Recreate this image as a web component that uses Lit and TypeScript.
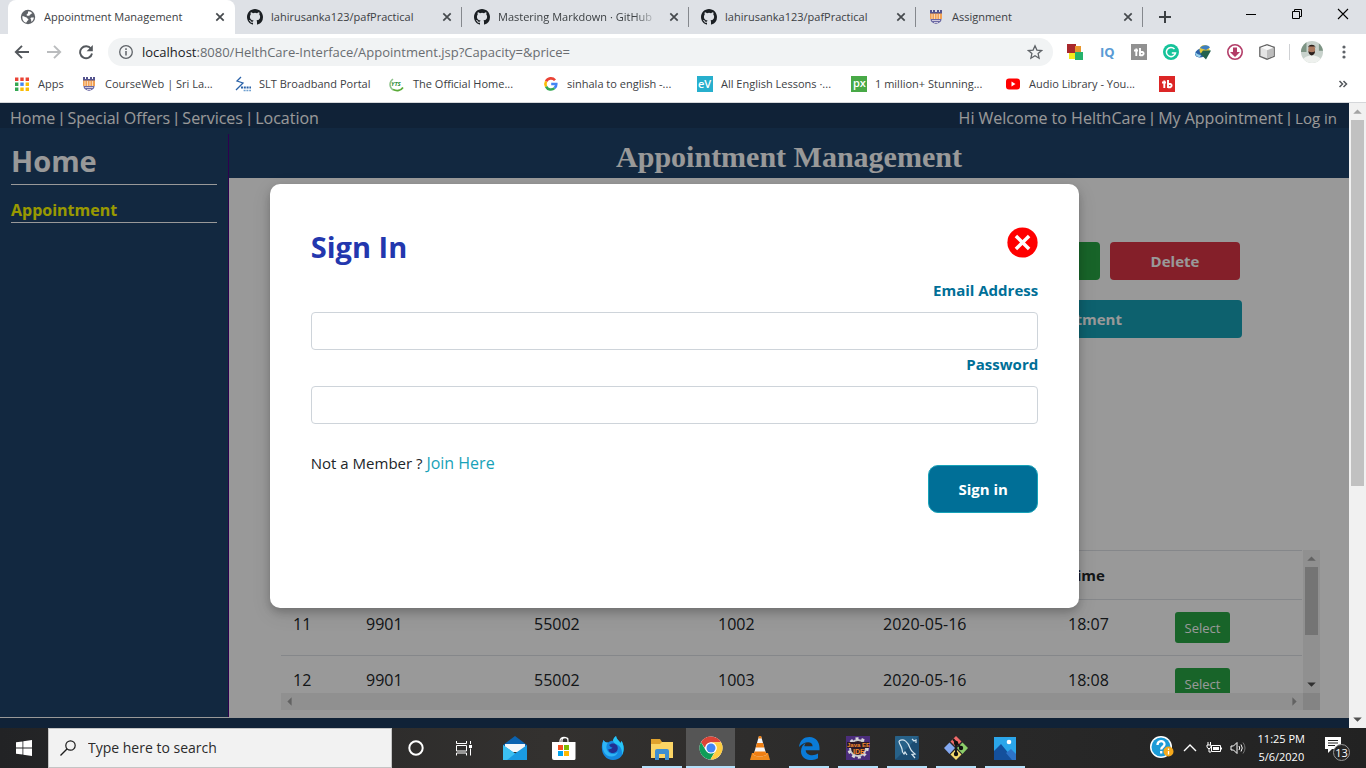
import { LitElement, html, css, svg, nothing } from "lit";
import { customElement, property } from "lit/decorators.js";

const octocat = svg`<path fill="#1b1f23" d="M8 0C3.58 0 0 3.58 0 8c0 3.54 2.29 6.53 5.47 7.59.4.07.55-.17.55-.38 0-.19-.01-.82-.01-1.49-2.01.37-2.53-.49-2.69-.94-.09-.23-.48-.94-.82-1.13-.28-.15-.68-.52-.01-.53.63-.01 1.08.58 1.23.82.72 1.21 1.87.87 2.33.66.07-.52.28-.87.51-1.07-1.78-.2-3.64-.89-3.64-3.95 0-.87.31-1.59.82-2.15-.08-.2-.36-1.02.08-2.12 0 0 .67-.21 2.2.82a7.6 7.6 0 0 1 4 0c1.53-1.04 2.2-.82 2.2-.82.44 1.1.16 1.92.08 2.12.51.56.82 1.27.82 2.15 0 3.07-1.87 3.75-3.65 3.95.29.25.54.73.54 1.48 0 1.07-.01 1.93-.01 2.2 0 .21.15.46.55.38A8.01 8.01 0 0 0 16 8c0-4.42-3.58-8-8-8z"/>`;
const crest = svg`<path fill="#55548e" d="M2 1h2v2h1V1h2v2h2V1h2v2h1V1h2v4H2z"/><path fill="#f2a154" d="M2 4.500h12V10H2z"/><path stroke="#fbe6d0" stroke-width=".8" d="M4 5v5M6.500 5v5M9 5v5M11.500 5v5"/><path fill="#6b69a4" d="M2.500 10h11c0 3-2.500 4-5.500 5-3-1-5.500-2-5.500-5z"/><path stroke="#e9e3ee" d="M4 11.500h8M6 13.500h4" stroke-width=".8"/>`;

const icons: Record<string, unknown> = {
  globe: svg`<circle cx="8" cy="8" r="7.200" fill="#5f6368"/><path fill="#fff" d="M2.500 7c1.500 0 2 1 3.500 1.200 1 .2 1 1.300 2 1.500.8.3.4 1.600-.5 2.100-.7.500-.6 1.600-1.500 2A6 6 0 0 1 2.500 7zM8.500 2.200c1.200 0 2.900.7 3.900 2-1 .2-1.200 1-2 1.200-.9.200-.6 1.400-1.700 1.300-1-.2-2 .2-2.100-.8 0-.9 1.300-.9 1.400-1.900.1-.8-.3-1.300.5-1.800zM10.600 9c1-.8 2-.5 3.300-.4-.2 1.700-1.100 3.300-2.500 4.200-.5-.9.100-1.500-.4-2.300-.3-.6-.8-1-.4-1.500z"/>`,
  github: octocat,
  crest,
  slt: svg`<path d="M6 1 2 5l6 2-5 5-2 2" fill="none" stroke="#2a62a8" stroke-width="1.300"/><path stroke="#2a62a8" stroke-width="2" stroke-dasharray="2 .8" d="M6 11.500h10"/><path stroke="#6fa0d0" stroke-width="1.500" stroke-dasharray="2 .8" d="M8.600 14.500h7.400"/>`,
  yts: svg`<path d="M4 3C0 6 0 11 4 14" fill="none" stroke="#8cc28a" stroke-width="1.500"/><path d="M4 13.500c4 2 8 1 10-2" fill="none" stroke="#5aaa38" stroke-width="1.700"/><text x="2" y="10" font-size="6" font-weight="700" font-style="italic" font-family="Open Sans" fill="#2f8f3a">YTS</text>`,
  google: svg`<g fill="none" stroke-width="2.600"><path stroke="#ea4335" d="M3.100 5.400A5.300 5.300 0 0 1 12 4.300"/><path stroke="#fbbc05" d="M3.100 5.400a5.300 5.300 0 0 0 0 5.200"/><path stroke="#34a853" d="M3.100 10.600a5.300 5.300 0 0 0 8.400 1.500"/><path stroke="#4285f4" d="M8.200 8h5.100a5.200 5.200 0 0 1-1.800 4.100"/></g>`,
  ev: svg`<rect width="16" height="16" fill="#27afcd"/><text x="1" y="12" font-size="11" font-weight="600" font-family="Open Sans" fill="#fff">eV</text>`,
  px: svg`<rect width="16" height="16" fill="#48a947"/><text x="2" y="11" font-size="11" font-weight="600" font-family="Open Sans" fill="#fff">px</text>`,
  youtube: svg`<rect x="1" y="2.500" width="14" height="11" rx="3" fill="#f00"/><path fill="#fff" d="m6.500 5.500 4 2.500-4 2.500z"/>`,
  tbred: svg`<rect width="16" height="16" fill="#dc2626"/><path fill="none" stroke="#fff" stroke-width="1.900" d="M3 6.500h4M5.300 4.500V12M9 4v8M9 8h2.500a1.700 1.700 0 0 1 0 3.200H9"/>`,
  tbgrey: svg`<rect width="16" height="16" fill="#919191"/><path fill="none" stroke="#fff" stroke-width="1.900" d="M3 6.500h4M5.300 4.500V12M9 4v8M9 8h2.500a1.700 1.700 0 0 1 0 3.200H9"/>`,
  apps: svg`<g><path fill="#ea4335" d="M1 1.500h3.400v3.400H1zM6.300 1.500h3.400v3.400H6.300zM11.600 1.500H15v3.400h-3.400z"/><path fill="#34a853" d="M1 6.500h3.400v3.400H1zM1 11.500h3.400v3.400H1z"/><path fill="#4285f4" d="M6.300 6.500h3.400v3.400H6.300z"/><path fill="#fbbc05" d="M11.600 6.500H15v3.400h-3.400zM6.300 11.500h3.400v3.400H6.300zM11.600 11.500H15v3.400h-3.400z"/></g>`,
  close: svg`<path d="m4.300 4.300 7.400 7.400M11.700 4.300l-7.400 7.400" stroke="#45494d" stroke-width="1.700"/>`,
  plus: svg`<path d="M8 2v12M2 8h12" stroke="#3c4043" stroke-width="2"/>`,
  min: svg`<path d="M3 8.500h10" stroke="#000"/>`,
  restore: svg`<path d="M3.500 5.500h7v7h-7zM5.500 5.500v-2h7v7h-2" fill="none" stroke="#000"/>`,
  exit: svg`<path d="m3 3 10 10M13 3 3 13" stroke="#000" stroke-width="1.100"/>`,
  back: svg`<path d="M15 8H2M8 1.800 1.800 8 8 14.200" fill="none" stroke="#54585d" stroke-width="1.900"/>`,
  forward: svg`<path d="M1 8h13M8 1.800 14.200 8 8 14.200" fill="none" stroke="#babcbe" stroke-width="1.900"/>`,
  reload: svg`<path d="M13 4.800A6 6 0 1 0 14 9.500" fill="none" stroke="#54585d" stroke-width="1.900"/><path fill="#54585d" d="M14.800 1v6.200H8.600z"/>`,
  info: svg`<circle cx="8" cy="8" r="6.300" fill="none" stroke="#5f6368" stroke-width="1.300"/><path d="M8 7v4.500M8 4.300V6" stroke="#5f6368" stroke-width="1.500"/>`,
  star: svg`<path d="m8 1.800 1.900 4.300 4.700.4-3.500 3.100 1 4.600L8 11.800l-4.100 2.400 1-4.600-3.500-3.100 4.700-.4z" fill="none" stroke="#5f6368" stroke-width="1.300"/>`,
  blocks: svg`<path fill="#a8282c" d="M0 0h9v9H0z"/><path fill="#e9962c" d="M8 2h6v6H8z"/><path fill="#f5ea1d" d="M2 9h6v6H2z"/><path fill="#26b26c" d="M8 8h8v8H8z"/>`,
  iq: svg`<text x="1" y="13" font-size="13" font-weight="700" font-family="Open Sans" fill="#5a9bd5">IQ</text>`,
  grammarly: svg`<circle cx="8" cy="8" r="8" fill="#15c39a"/><path d="M11.500 5A4.600 4.600 0 1 0 12.500 9H8.800" fill="none" stroke="#fff" stroke-width="1.500"/>`,
  idm: svg`<ellipse cx="7" cy="8.500" rx="7.500" ry="4.600" fill="#2c62a8" transform="rotate(-20 7 8)"/><circle cx="9.500" cy="6" r="5" fill="#e4c93a"/><path fill="#3f7fc0" d="M5 4c2-3 8-4 10-.5L11 6z"/><path fill="#24624e" d="M8 6.500h8l-5 9-5.500-5.500z"/><path fill="#9bd4ec" d="M0 8c2 2 4 3 6 3l-1 2C2 13 0 11 0 8z"/>`,
  download: svg`<circle cx="8" cy="8" r="7.200" fill="#fff" stroke="#b33d68" stroke-width="1.600"/><path fill="#b33d68" d="M6 3.500h4V8h3l-5 5-5-5h3z"/>`,
  cube: svg`<path fill="#e4e4e4" stroke="#666" stroke-width="1.300" d="M.8 3.300 8 .8l7.200 2.500v9L8 15.200.8 12.300z"/><path fill="#bdbdbd" d="M8 6.200 14.500 4v7.900L8 14.500z"/><path fill="#fafafa" d="M8 1.500 14 3.600 8 6 2 3.600z"/>`,
  dots: svg`<g fill="#5f6368"><circle cx="8" cy="3" r="1.600"/><circle cx="8" cy="8" r="1.600"/><circle cx="8" cy="13" r="1.600"/></g>`,
  more: svg`<path d="m4.500 5 3 3-3 3M8.500 5l3 3-3 3" fill="none" stroke="#54585d" stroke-width="1.500"/>`,
  avatar: svg`<defs><clipPath id="c"><circle cx="8" cy="8" r="8"/></clipPath></defs><g clip-path="url(#c)"><path fill="#c8d2cc" d="M0 0h16v16H0z"/><path fill="#7d9484" d="M0 0h4v8H0zM13 0h3v7h-3z"/><path fill="#eef1ee" d="M1 16c0-4 3-5.500 7-5.500s7 1.500 7 5.500z"/><ellipse cx="7.800" cy="6.300" rx="2.500" ry="3.400" fill="#a9785e"/><path fill="#2a201c" d="M5 5c0-3 5.600-3 5.600 0L10 4H5.600zM5.400 7.500c1.500 1 3.400 1 4.800 0-.2 4-4.600 4-4.800 0z"/></g>`,
  up: svg`<path d="m4 10 4-4 4 4z"/>`,
  down: svg`<path d="m4 6 4 4 4-4z"/>`,
  left: svg`<path d="M10 4 6 8l4 4z"/>`,
  right: svg`<path d="m6 4 4 4-4 4z"/>`,
  cross: svg`<circle cx="8" cy="8" r="7.800" fill="#f00"/><path d="m4.600 4.600 6.800 6.800M11.400 4.600l-6.800 6.800" stroke="#fff" stroke-width="1.800"/>`,
  windows: svg`<path fill="#fff" d="M0 2.300 6.500 1.400V7.600H0zM7.300 1.300 16 0v7.600H7.300zM0 8.400h6.500v6.200L0 13.700zM7.300 8.400H16V16l-8.700-1.300z"/>`,
  search: svg`<circle cx="10.500" cy="5.500" r="4.700" fill="none" stroke="#1d1d1d" stroke-width="1.200"/><path d="M7.200 8.800.5 15.500" stroke="#1d1d1d" stroke-width="1.300"/>`,
  cortana: svg`<circle cx="8" cy="8" r="6.700" fill="none" stroke="#fff" stroke-width="2"/>`,
  taskview: svg`<path d="M.5 1v2.500h10V1M.5 15.500V13h10v2.500M.5 5.500h10v5.500H.5zM14.500 1v3M14.500 8.500v7" fill="none" stroke="#fff"/><path fill="#fff" d="M13 5h3v3h-3z"/>`,
  mail: svg`<path fill="#0b63b0" d="M0 9 12 0l12 9v3H0z"/><path fill="#f5f7f9" d="M2 8h20v8H2z"/><path fill="#1a9be2" d="m0 9 12 8.500L24 9v15H0z"/><path fill="#3cc0f2" d="M0 9v15h4l12-9.500-4 3z"/>`,
  store: svg`<path d="M8 8V5c0-5 8-5 8 0v3M10 6V4c0-3 6-3 6-.5" fill="none" stroke="#fff" stroke-width="1.200"/><path fill="#fff" d="M0 6h23.500v16.500q0 1.500-1.500 1.500h-20q-2 0-2-2z"/><path fill="#f25022" d="M6 9h5v5H6z"/><path fill="#7fba00" d="M12 9h5v5h-5z"/><path fill="#00a4ef" d="M6 15h5v5H6z"/><path fill="#ffb900" d="M12 15h5v5h-5z"/>`,
  firefox: svg`<path fill="#1489e0" d="M2.500 4C3.500 6 5 6.500 7 6.500 9 5 11 4.500 12 4.800 12.200 3 13.500 1 15 0c.3 3 3 4.500 4.500 7L20.500 5C25 12 23 24 12 24 3 24-2 14 2.500 4z"/><path fill="#27c4f5" d="M15 0c.3 3 3 4.500 4.500 7L20.500 5c3 5 2.600 10 .5 14 .5-6-2-9.500-6-11-2-1-2.500-2-3-3.200C12.200 3 13.500 1 15 0z"/><path fill="#2fb5f5" d="M2.500 4C3.500 6 5 6.500 7 6.500 5 9 5 12 6 14c2 5 8 5 11 2-2 6-11 6-14 0C1 12 1 8 2.500 4z"/><path fill="#232f91" d="M8 9c2-2 6-2.500 8 .5s0 7.500-4 7.500c-3 0-5-2-4.500-4 1.500.5 3 0 4-1.500-2 0-2.500-1.500-3.500-2.500z"/>`,
  explorer: svg`<path fill="#e0a32e" d="M1 3h9l2 3h11v6H1z"/><path fill="#fbd565" d="M1 8h9l2-2h11v16H1z"/><path fill="#3d8fd1" d="M5 15q0-2 2-2h10q2 0 2 2v9h-4v-6H9v6H5z"/>`,
  chrome: svg`<circle cx="12" cy="12" r="11.500" fill="#fff"/><path fill="#db4437" d="M2 6.200A11.500 11.500 0 0 1 22 6.300H12A5.700 5.700 0 0 0 7 9.100l-1 3z"/><path fill="#0f9d58" d="M2 6.200a11.500 11.500 0 0 0 9.400 17.300l5-8.700a5.700 5.700 0 0 1-9.400 0z"/><path fill="#ffcd40" d="M22 6.300a11.500 11.500 0 0 1-10.600 17.200l5.500-8.700a5.700 5.700 0 0 0-4.900-8.500z"/><circle cx="12" cy="12" r="5.600" fill="#fff"/><circle cx="12" cy="12" r="4.500" fill="#4285f4"/>`,
  vlc: svg`<path fill="#f18a1c" d="M4 17h16l2 7H2z"/><path fill="#f6f6f6" d="M11 0h2l5.500 19q-6.500 3-13 0z"/><path fill="#f07f12" d="M10.300 2.500 11 0h2l.7 2.500zM9 7h6l1.300 4.500H7.700zM6.500 15.500h11l1 3.500q-6.500 3-13 0z"/>`,
  edge: svg`<path fill="#0a7bd8" d="M2 11C3 4 7 1 12.500 1 19 1 22.500 6 22.500 12v2.200H8.700c.3 5 7.300 6.500 12.300 3.300v4.700c-7 4-17 1.500-17-7 0-4 2-7 5-8.500-1 1-1.500 2.300-1.600 3.500h8.200c0-5.500-8.600-5-13.600.8z"/>`,
  javaee: svg`<path fill="#4b2d7c" d="M0 0h24v24H0z"/><circle cx="12" cy="12" r="8" fill="#2c1a28" stroke="#c9c9c9" stroke-width="2"/><circle cx="12" cy="12" r="9.500" fill="none" stroke="#d9d9d9" stroke-width="2.500" stroke-dasharray="3 3"/><path fill="#2c1a28" d="M1 6h22v6H1z"/><text x="1" y="11" font-size="6" font-weight="700" font-family="Liberation Sans" fill="#f68a2c">Java EE</text><text x="7" y="18" font-size="7" font-weight="700" font-family="Liberation Sans" fill="#f68a2c">IDE</text>`,
  mysql: svg`<rect width="24" height="24" rx="2" fill="#1c4d73"/><path fill="#2f6f96" d="M0 0h24L0 24z" opacity=".6"/><path d="M4 5c5-3 9 1 11 7 1 3 3 4 5 6l-3 .5 3 3.500M4 5c0 3 2 4 3 8 0 2 1 4 2 5l1-2 2 3M17 3l2 2 2-1v3" fill="none" stroke="#d7e6ef" stroke-width="1.200"/>`,
  git: svg`<path fill="#f06a6a" d="m12 0 5.500 5.500L12 11 6.500 5.500z"/><path fill="#84a9f2" d="M5.500 6.500 11 12l-5.500 6L0 12z"/><path fill="#8cce6a" d="M18.500 6.500 24 12l-5.500 6L13 12z"/><path fill="#f5dc6e" d="m12 13 5.500 5.500L12 24l-5.500-5.500z"/><path d="M9 3l8 9M12 6v13" stroke="#1c1c1c" stroke-width="2"/><circle cx="12" cy="7" r="2.200" fill="#111"/><circle cx="17" cy="12" r="2.200" fill="#111"/><circle cx="12" cy="18" r="2.200" fill="#111"/>`,
  photos: svg`<path fill="#2ba6ea" d="M1 1h22v23H1z"/><path fill="#14509c" d="M1 15 8 8l13 16H1z"/><path fill="#2d73c8" d="m13 17 5-4 5 5v6h-4z"/><circle cx="16" cy="6" r="2.300" fill="#fff"/>`,
  help: svg`<circle cx="11" cy="11" r="11" fill="#fff"/><circle cx="11" cy="11" r="9.500" fill="#1b9ad6"/><path d="M7.500 9c0-5 7-5 7-.8 0 2.500-3.300 2.600-3.300 5.300M11.200 15v2.500" fill="none" stroke="#fff" stroke-width="2.300"/><circle cx="18.500" cy="15.500" r="5" fill="#f5a81c"/><path d="M18.500 12.500V14M18.500 15v3.500" stroke="#fff" stroke-width="1.300"/>`,
  caret: svg`<path d="m2 11 6-6 6 6" fill="none" stroke="#fff" stroke-width="1.400"/>`,
  battery: svg`<path d="M5.500 5.500h9v6h-9zM15.500 7.500v2M2 2v3M4.500 2v3M1 5h4v2l-1 1.500H2L1 7zM3 8.500V12h2" fill="none" stroke="#fff"/><path fill="#fff" d="M7 7h6v3H7z"/>`,
  volume: svg`<path d="M1 6h2.500L7 2.500v11L3.500 10H1zM9 6q1.500 2 0 4" fill="none" stroke="#fff"/><path d="M11 4.500q2.500 3.500 0 7" fill="none" stroke="#fff"/><path d="M13 2.500q4 5.500 0 11" fill="none" stroke="#777"/>`,
  note: svg`<path fill="#fff" d="M0 0h16v12H7l-4 4v-4H0z"/><path d="M3 3.500h10M3 6h10M3 8.500h7" stroke="#222"/>`,
};

@customElement("ui-icon")
export class UiIcon extends LitElement {
  @property() name = "";
  @property({ type: Number }) size = 16;
  @property({ type: Number }) box = 16;

  static styles = css`
    :host { display: inline-flex; flex: none; }
    svg { display: block; }
  `;

  render() {
    return html`<svg width=${this.size} height=${this.size} viewBox="0 0 ${this.box} ${this.box}" fill="currentColor" aria-hidden="true">${icons[this.name]}</svg>`;
  }
}

@customElement("browser-chrome")
export class BrowserChrome extends LitElement {
  static styles = css`
    :host { display: block; font: 11px/16px "Open Sans", sans-serif; color: #3c4043; background: #fff; border-bottom: 1px solid #d5d7da; }
    button { border: 0; padding: 0; background: none; display: flex; align-items: center; justify-content: center; font: inherit; color: inherit; }
    .tabs { display: flex; background: #dee1e6; height: 34px; padding-left: 8px; }
    .tab { flex: 0 1 227px; min-width: 0; display: flex; align-items: center; gap: 8px; padding: 0 7px 0 12px; box-sizing: border-box; }
    .tab.active { background: #fff; border-radius: 8px 8px 0 0; }
    .tab.ruled { background: linear-gradient(#85888d, #85888d) right center / 1px 20px no-repeat; }
    .label { flex: 1; min-width: 0; overflow: hidden; white-space: nowrap; }
    .label.fade { mask-image: linear-gradient(90deg, #000 85%, transparent); }
    .add { width: 44px; }
    .window { display: flex; margin-left: auto; }
    .window button { width: 46px; height: 28px; }
    .bar { display: flex; align-items: center; height: 36px; padding: 0 6px; }
    .nav { width: 32px; height: 32px; }
    .address { flex: 1; display: flex; align-items: center; gap: 8px; height: 28px; margin: 0 6px; padding: 0 10px; border-radius: 14px; background: #f1f3f4; font-size: 13px; line-height: 20px; color: #696d71; }
    .address span { flex: 1; }
    .address b { font-weight: 400; color: #202124; }
    .ext { width: 32px; }
    .split { width: 1px; height: 16px; margin: 0 6px; background: #cfd1d4; }
    .marks { display: flex; align-items: center; height: 28px; padding: 0 15px 4px 14px; }
    .mark { flex: 0 1 154px; min-width: 0; display: flex; align-items: center; gap: 8px; color: inherit; text-decoration: none; white-space: nowrap; }
    .mark.first { flex-basis: 67px; }
    .more { margin-left: auto; }
  `;

  render() {
    const tabs = [
      ["globe", "Appointment Management", "active"],
      ["github", "lahirusanka123/pafPractical", "ruled"],
      ["github", "Mastering Markdown · GitHub", "ruled", "fade"],
      ["github", "lahirusanka123/pafPractical", "ruled"],
      ["crest", "Assignment", "ruled"],
    ];
    const marks = [
      ["apps", "Apps"], ["crest", "CourseWeb | Sri La..."], ["slt", "SLT Broadband Portal"],
      ["yts", "The Official Home..."], ["google", "sinhala to english -..."], ["ev", "All English Lessons ·..."],
      ["px", "1 million+ Stunning..."], ["youtube", "Audio Library - You..."], ["tbred", ""],
    ];
    const extensions = ["blocks", "iq", "tbgrey", "grammarly", "idm", "download", "cube"];
    return html`
      <div class="tabs">
        ${tabs.map(([icon, text, kind, fade]) => html`
          <div class="tab ${kind}">
            <ui-icon name=${icon}></ui-icon>
            <span class="label ${fade ?? ""}">${text}</span>
            <button aria-label="Close tab"><ui-icon name="close"></ui-icon></button>
          </div>`)}
        <button class="add" aria-label="New tab"><ui-icon name="plus"></ui-icon></button>
        <div class="window">
          <button aria-label="Minimize"><ui-icon name="min"></ui-icon></button>
          <button aria-label="Restore"><ui-icon name="restore"></ui-icon></button>
          <button aria-label="Close"><ui-icon name="exit"></ui-icon></button>
        </div>
      </div>
      <div class="bar">
        <button class="nav" aria-label="Back"><ui-icon name="back"></ui-icon></button>
        <button class="nav" aria-label="Forward"><ui-icon name="forward"></ui-icon></button>
        <button class="nav" aria-label="Reload"><ui-icon name="reload"></ui-icon></button>
        <div class="address">
          <ui-icon name="info"></ui-icon>
          <span><b>localhost</b>:8080/HelthCare-Interface/Appointment.jsp?Capacity=&amp;price=</span>
          <ui-icon name="star"></ui-icon>
        </div>
        ${extensions.map((name) => html`<button class="ext" aria-label=${name}><ui-icon name=${name}></ui-icon></button>`)}
        <span class="split"></span>
        <button class="nav" aria-label="Profile"><ui-icon name="avatar" size="22"></ui-icon></button>
        <button class="nav" aria-label="Menu"><ui-icon name="dots"></ui-icon></button>
      </div>
      <div class="marks">
        ${marks.map(([icon, text], i) => html`
          <a class="mark ${i === 0 ? "first" : ""}" href="#" aria-label=${text || "tubebuddy"}><ui-icon name=${icon}></ui-icon>${text}</a>`)}
        <button class="more" aria-label="More bookmarks"><ui-icon name="more"></ui-icon></button>
      </div>`;
  }
}

@customElement("scroll-bar")
export class ScrollBar extends LitElement {
  @property({ reflect: true }) axis = "y";
  @property({ type: Number }) thumb = 0;

  static styles = css`
    :host { display: flex; box-sizing: border-box; background: #f1f1f1; color: #505050; }
    :host([axis="y"]) { width: 17px; flex-direction: column; align-items: center; }
    :host([axis="x"]) { height: 17px; align-items: center; }
    .track { flex: 1; }
    .thumb { width: 13px; background: #c1c1c1; }
    .dim { color: #a3a3a3; }
  `;

  render() {
    const vertical = this.axis === "y";
    return html`
      <ui-icon class="dim" name=${vertical ? "up" : "left"} size="17"></ui-icon>
      <div class="track">${vertical ? html`<div class="thumb" style="height:${this.thumb}%"></div>` : nothing}</div>
      <ui-icon class=${vertical ? "" : "dim"} name=${vertical ? "down" : "right"} size="17"></ui-icon>`;
  }
}

@customElement("sign-in-dialog")
export class SignInDialog extends LitElement {
  static styles = css`
    :host { display: block; box-sizing: border-box; width: 60%; padding: 43px 41px 95px; border-radius: 10px; background: #fff; color: #212529; font: 15px/24px "Open Sans", sans-serif; box-shadow: 0 4px 8px rgba(0, 0, 0, 0.2), 0 6px 20px rgba(0, 0, 0, 0.1); }
    .head { display: flex; justify-content: space-between; align-items: flex-start; }
    h1 { margin: 0; font-size: 29px; line-height: 40px; color: #2337ae; }
    .close { border: 0; padding: 0; background: none; }
    .close ui-icon { display: block; }
    form { display: flex; flex-direction: column; padding-top: 11px; }
    label { margin-bottom: 10px; text-align: right; font-weight: 700; color: #006f97; }
    input { box-sizing: border-box; width: 100%; height: 38px; margin-bottom: 2px; padding: 6px 12px; border: 1px solid #ced4da; border-radius: 4px; font: inherit; }
    .foot { display: flex; justify-content: space-between; align-items: flex-start; padding-top: 25px; }
    .foot p { margin: 0; }
    a { color: #17a2b8; text-decoration: none; font-size: 16px; }
    .submit { width: 110px; height: 48px; margin-top: 14px; border: 1px solid #17a2b8; border-radius: 10px; background: #006f97; color: #fff; font: inherit; font-weight: 700; }
  `;

  render() {
    return html`
      <div class="head">
        <h1>Sign In</h1>
        <button class="close" aria-label="Close"><ui-icon name="cross" size="31"></ui-icon></button>
      </div>
      <form>
        <label for="email">Email Address</label>
        <input id="email" type="email" />
        <label for="password">Password</label>
        <input id="password" type="password" />
        <div class="foot">
          <p>Not a Member ? <a href="#">Join Here</a></p>
          <button class="submit" type="button">Sign in</button>
        </div>
      </form>`;
  }
}

@customElement("health-page")
export class HealthPage extends LitElement {
  static styles = css`
    :host { display: flex; flex-direction: column; position: relative; background: #fff; color: #212529; font: 15px/24px "Open Sans", sans-serif; overflow: hidden; }
    .top { display: flex; justify-content: space-between; height: 25px; padding: 0 12px 0 10px; box-sizing: border-box; line-height: 30px; background: #1b395c; color: #fff; font-size: 16px; white-space: nowrap; }
    .top a { color: inherit; text-decoration: none; }
    .bar { font-family: Roboto, sans-serif; }
    .small { font-size: 15px; }
    .body { flex: 1; min-height: 0; display: grid; grid-template-columns: 229px minmax(0, 1fr); }
    .side { display: flex; background: #1e446b; padding-top: 6px; border-bottom: 1px solid #fff; }
    .menu { flex: 1; border-right: 1px solid #4b0082; padding: 6px 11px; }
    .menu h2 { margin: 0 0 14px; padding-bottom: 2px; font-size: 29px; line-height: 42px; color: #fff; border-bottom: 1px solid #fff; }
    .menu a { display: block; font-size: 16px; line-height: 23px; font-weight: 700; color: #ff0; text-decoration: none; border-bottom: 1px solid #fff; }
    .main { display: flex; flex-direction: column; min-height: 0; }
    .title { margin: 0; background: #1e446b; color: #fff; text-align: center; font: 700 30px/50px "Liberation Serif", serif; }
    .title span { display: block; height: 50px; line-height: 58px; }
    .actions { align-self: flex-end; width: 394px; margin: 64px 107px 0 0; display: grid; gap: 20px; }
    .pair { display: flex; gap: 10px; justify-content: flex-end; padding-right: 2px; }
    .btn { height: 38px; border: 0; border-radius: 4px; color: #fff; font: inherit; font-weight: 700; }
    .pair .btn { width: 130px; }
    .green { background: #28a745; }
    .red { background: #dc3545; }
    .teal { background: #17a2b8; }
    .panel { margin: auto 29px 8px 52px; display: grid; grid-template: 143px 17px / minmax(0, 1fr) 17px; }
    .rows { overflow: hidden; padding-right: 1px; }
    .corner { background: #dcdcdc; }
    table { width: 100%; border-collapse: collapse; table-layout: fixed; }
    th, td { padding: 12px; text-align: left; vertical-align: top; border-top: 1px solid #dee2e6; height: 24px; }
    td { font-size: 16px; }
    .select { height: 31px; width: 55px; padding: 0; border: 0; border-radius: 3px; background: #28a745; color: #fff; font: inherit; font-size: 13px; display: block; }
    .id { width: 49px; } .patient { width: 144px; } .doctor { width: 160px; } .room { width: 141px; } .date { width: 161px; } .time { width: 83px; }
    .foot { height: 10px; background: #1b395c; }
    .overlay { position: absolute; inset: 0; display: flex; justify-content: center; align-items: flex-start; padding-top: 81px; background: rgba(0, 0, 0, 0.4); }
  `;

  render() {
    const rows = [
      ["11", "9901", "55002", "1002", "2020-05-16", "18:07"],
      ["12", "9901", "55002", "1003", "2020-05-16", "18:08"],
    ];
    const bar = html` <span class="bar">|</span> `;
    return html`
      <nav class="top">
        <div><a href="#">Home</a>${bar}<a href="#">Special Offers</a>${bar}<a href="#">Services</a>${bar}<a href="#">Location</a></div>
        <div>Hi Welcome to HelthCare${bar}<a href="#">My Appointment</a>${bar}<a class="small" href="#">Log in</a></div>
      </nav>
      <div class="body">
        <aside class="side">
          <div class="menu"><h2>Home</h2><a href="#">Appointment</a></div>
        </aside>
        <main class="main">
          <h1 class="title"><span>Appointment Management</span></h1>
          <div class="actions">
            <div class="pair"><button class="btn green">Update</button><button class="btn red">Delete</button></div>
            <button class="btn teal">Search Appointment</button>
          </div>
          <div class="panel">
            <div class="rows">
              <table>
                <thead><tr><th class="id">ID</th><th class="patient">Patient</th><th class="doctor">Doctor</th><th class="room">Hospital</th><th class="date">Date</th><th class="time">Time</th><th></th></tr></thead>
                <tbody>${rows.map((r) => html`<tr>${r.map((c) => html`<td>${c}</td>`)}<td><button class="select">Select</button></td></tr>`)}</tbody>
              </table>
            </div>
            <scroll-bar axis="y" thumb="62"></scroll-bar>
            <scroll-bar axis="x"></scroll-bar>
            <div class="corner"></div>
          </div>
        </main>
      </div>
      <div class="foot"></div>
      <div class="overlay"><sign-in-dialog></sign-in-dialog></div>`;
  }
}

@customElement("task-bar")
export class TaskBar extends LitElement {
  static styles = css`
    :host { display: flex; height: 40px; background: linear-gradient(90deg, #222325, #33312f 40%, #292929 70%, #222); color: #fff; font: 11px/18px "Open Sans", sans-serif; }
    button { border: 0; padding: 0; background: none; color: inherit; font: inherit; display: flex; align-items: center; justify-content: center; }
    .sys { width: 48px; }
    .search { flex: 0 1 344px; box-sizing: border-box; display: flex; align-items: center; gap: 12px; padding: 0 11px; background: #f2f2f2; border: 1px solid #c4c4c4; color: #222; }
    .search input { flex: 1; min-width: 0; padding: 0; border: 0; background: none; font: 14px/20px "Open Sans", sans-serif; outline: 0; }
    .search input::placeholder { color: #2b2b2b; opacity: 1; }
    .apps { display: flex; margin-left: 2px; }
    .app { width: 49px; box-sizing: border-box; border-bottom: 2px solid transparent; padding-top: 2px; }
    .open { background: linear-gradient(#b4e0fa, #b4e0fa) center bottom / 40px 2px no-repeat border-box; }
    .active { background: #555; border-bottom-color: #b4e0fa; }
    .tray { display: flex; align-items: center; margin-left: auto; padding-right: 16px; gap: 8px; }
    .clock { text-align: center; margin: 0 12px 0 4px; }
    .note { position: relative; width: 25px; height: 22px; justify-content: flex-start; align-items: flex-start; }
    .count { position: absolute; right: 0; bottom: -2px; width: 17px; height: 17px; border: 1px solid #999; border-radius: 50%; background: #262626; font-size: 11px; line-height: 16px; box-sizing: border-box; text-align: center; }
  `;

  render() {
    const apps = [
      ["mail", ""], ["store", ""], ["firefox", ""], ["explorer", "open"], ["chrome", "active"], ["vlc", ""],
      ["edge", "open"], ["javaee", "open"], ["mysql", "open"], ["git", "open"], ["photos", "open"],
    ];
    return html`
      <button class="sys" aria-label="Start"><ui-icon name="windows"></ui-icon></button>
      <label class="search"><ui-icon name="search"></ui-icon><input type="text" placeholder="Type here to search" aria-label="Search" /></label>
      <button class="sys" aria-label="Cortana"><ui-icon name="cortana"></ui-icon></button>
      <button class="sys" aria-label="Task view"><ui-icon name="taskview"></ui-icon></button>
      <div class="apps">
        ${apps.map(([name, state]) => html`<button class="app ${state}" aria-label=${name}><ui-icon name=${name} size="24" box="24"></ui-icon></button>`)}
      </div>
      <div class="tray">
        <ui-icon name="help" size="24" box="24"></ui-icon>
        <ui-icon name="caret"></ui-icon>
        <ui-icon name="battery"></ui-icon>
        <ui-icon name="volume"></ui-icon>
        <div class="clock">11:25 PM<br />5/6/2020</div>
        <button class="note" aria-label="Notifications"><ui-icon name="note"></ui-icon><span class="count">13</span></button>
      </div>`;
  }
}

@customElement("app-root")
export class AppRoot extends LitElement {
  static styles = css`
    :host { display: flex; flex-direction: column; height: 100vh; overflow: hidden; }
    .view { flex: 1; min-height: 0; display: flex; }
    .page { flex: 1; min-width: 0; }
  `;

  render() {
    return html`
      <browser-chrome></browser-chrome>
      <div class="view">
        <health-page class="page"></health-page>
        <scroll-bar axis="y" thumb="62"></scroll-bar>
      </div>
      <task-bar></task-bar>`;
  }
}
